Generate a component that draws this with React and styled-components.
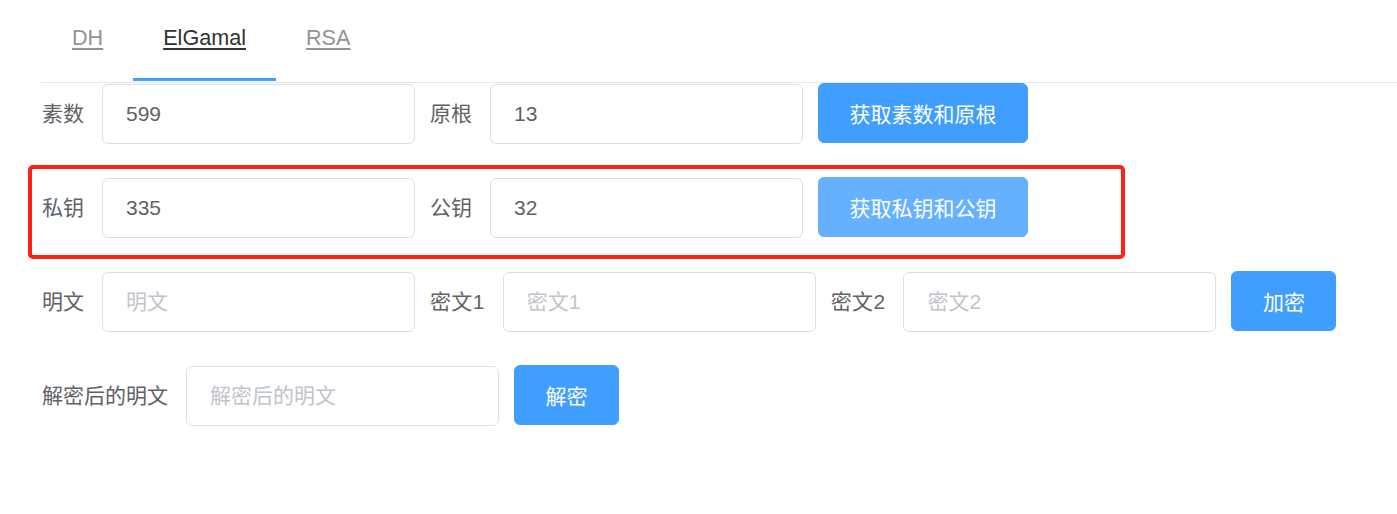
import React from "react";
import styled, { createGlobalStyle } from "styled-components";

const Global = createGlobalStyle`
  html, body { margin: 0; padding: 0; background: #fff; }
  body { font-family: "Liberation Sans", "Noto Sans CJK SC", sans-serif; }
  * { box-sizing: border-box; }
`;

const Page = styled.div`
  padding-left: 41px;
  width: 1397px;
`;

const TabNav = styled.nav`
  display: flex;
  height: 83px;
  border-bottom: 1px solid #e4e7ed;
  padding-left: 1px;
`;

const Tab = styled.a`
  position: relative;
  display: flex;
  align-items: center;
  height: 81px;
  padding: 0 30px 5px;
  font-size: 21.6px;
  color: ${(p) => (p.$active ? "#303133" : "#909399")};
  text-decoration: underline;
  text-underline-offset: 3px;
  text-decoration-thickness: 2px;
  cursor: pointer;
  &::after {
    content: "";
    position: absolute;
    left: 0;
    right: 0;
    bottom: 0;
    height: 3px;
    background: ${(p) => (p.$active ? "#409eff" : "transparent")};
  }
`;

const Form = styled.div`
  display: flex;
  flex-direction: column;
  gap: 34px;
  padding: 1px 0 0 1px;
`;

const Row = styled.div`
  position: relative;
  display: flex;
  align-items: flex-start;
  height: 60px;
`;

const Highlight = styled.div`
  position: absolute;
  left: -14px;
  top: -13px;
  width: 1097px;
  height: 94px;
  border: 4px solid #ff2117;
  border-radius: 5px;
  pointer-events: none;
`;

const Item = styled.div`
  display: flex;
  align-items: center;
  margin-right: 15px;
`;

const Label = styled.label`
  font-size: 21px;
  color: #606266;
  line-height: 60px;
  padding-right: 18px;
  white-space: nowrap;
  letter-spacing: ${(p) => (p.$digits ? "0.35px" : "0")};
`;

const Input = styled.input`
  width: 313px;
  height: 60px;
  border: 1px solid #dcdfe6;
  border-radius: 6px;
  padding: 0 23px;
  font-family: inherit;
  font-size: 21px;
  color: #606266;
  outline: none;
  &::placeholder { color: #c0c4cc; }
`;

const Button = styled.button`
  height: 60px;
  margin-top: -1px;
  padding: 0 30.5px;
  border: 1px solid ${(p) => (p.$light ? "#66b1ff" : "#409eff")};
  background: ${(p) => (p.$light ? "#66b1ff" : "#409eff")};
  color: #fff;
  border-radius: 6px;
  font-family: inherit;
  font-size: 21px;
  cursor: pointer;
  white-space: nowrap;
`;

const Field = ({ label, value, placeholder, digits }) => (
  <Item>
    <Label $digits={digits}>{label}</Label>
    <Input defaultValue={value} placeholder={placeholder} />
  </Item>
);

export default function App() {
  return (
    <Page>
      <Global />
      <TabNav>
        <Tab>DH</Tab>
        <Tab $active>ElGamal</Tab>
        <Tab>RSA</Tab>
      </TabNav>
      <Form>
        <Row>
          <Field label="素数" value="599" />
          <Field label="原根" value="13" />
          <Button>获取素数和原根</Button>
        </Row>
        <Row>
          <Highlight />
          <Field label="私钥" value="335" />
          <Field label="公钥" value="32" />
          <Button $light>获取私钥和公钥</Button>
        </Row>
        <Row>
          <Field label="明文" placeholder="明文" />
          <Field label="密文1" placeholder="密文1" digits />
          <Field label="密文2" placeholder="密文2" digits />
          <Button>加密</Button>
        </Row>
        <Row>
          <Field label="解密后的明文" placeholder="解密后的明文" />
          <Button>解密</Button>
        </Row>
      </Form>
    </Page>
  );
}
